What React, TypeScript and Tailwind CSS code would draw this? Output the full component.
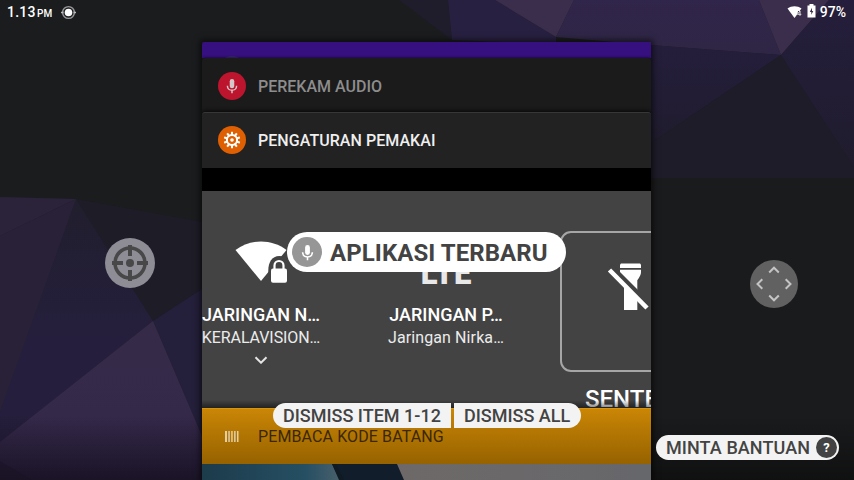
import React from "react";

function Wallpaper() {
  return (
    <svg className="absolute inset-0 h-full w-full" viewBox="0 0 854 480" preserveAspectRatio="none">
      <defs>
        <linearGradient id="leftDeep" x1="0" y1="0" x2="0" y2="1">
          <stop offset="0" stopColor="#211e2d" />
          <stop offset="0.6" stopColor="#251f3d" />
          <stop offset="1" stopColor="#251e3c" />
        </linearGradient>
        <linearGradient id="leftPeak" x1="0" y1="0" x2="0" y2="1">
          <stop offset="0" stopColor="#352b47" />
          <stop offset="0.6" stopColor="#35294a" />
          <stop offset="1" stopColor="#2c2141" />
        </linearGradient>
        <linearGradient id="topPurple" x1="0" y1="0" x2="0" y2="1">
          <stop offset="0" stopColor="#30254a" />
          <stop offset="1" stopColor="#2f2645" />
        </linearGradient>
        <linearGradient id="rightDeep" x1="0" y1="0" x2="0" y2="1">
          <stop offset="0" stopColor="#241e3c" />
          <stop offset="1" stopColor="#201c2d" />
        </linearGradient>
        <linearGradient id="bottomFade" x1="0" y1="0" x2="0" y2="1">
          <stop offset="0" stopColor="#000" stopOpacity="0" />
          <stop offset="1" stopColor="#000" stopOpacity="0.4" />
        </linearGradient>
      </defs>
      <rect width="854" height="480" fill="#1b1c1e" />
      <polygon points="0,197 76,199 202,222 202,480 0,480" fill="#1f1c28" />
      <polygon points="0,197 76,199 153,321 0,442" fill="url(#leftDeep)" />
      <polygon points="0,197 76,199 0,236" fill="#2a2339" />
      <polygon points="0,236 76,199 61,241 0,412" fill="#282137" />
      <polygon points="76,199 153,321 202,289 202,222" fill="#1e1c27" />
      <polygon points="153,321 202,289 202,436" fill="#241f3a" />
      <polygon points="0,442 153,321 202,436 202,480 0,480" fill="url(#leftPeak)" />
      <polygon points="0,461 32,480 0,480" fill="#291f3c" />
      <polygon points="399,0 448,0 452,40" fill="#1f1c2b" />
      <polygon points="448,0 495,0 556,37 556,44 452,40" fill="#282040" />
      <polygon points="495,0 574,0 556,37" fill="#3b2e4c" />
      <polygon points="574,0 759,0 781,55 651,45 556,37" fill="url(#topPurple)" />
      <polygon points="651,45 781,55 651,143" fill="url(#rightDeep)" />
      <polygon points="781,55 854,167 854,178 651,178 651,143" fill="#1e1c29" />
      <polygon points="759,0 829,0 781,55" fill="#3b2e4c" />
      <polygon points="829,0 854,0 854,167 781,55" fill="url(#rightDeep)" />
      <rect x="651" y="178" width="203" height="302" fill="#1a1b1c" />
      <rect y="415" width="854" height="65" fill="url(#bottomFade)" />
    </svg>
  );
}

function Mic({ className }: { className: string }) {
  return (
    <svg className={className} viewBox="0 0 24 24" fill="currentColor">
      <rect x="8.6" y="1.5" width="6.8" height="14" rx="3.4" />
      <path d="M4 11.5h2.2a5.8 5.8 0 0 0 11.6 0H20a8 8 0 0 1-6.9 7.7V23h-2.2v-3.8A8 8 0 0 1 4 11.5z" />
    </svg>
  );
}

const teeth = [0, 36, 72, 108, 144, 180, 216, 252, 288, 324];

function Gear() {
  return (
    <svg className="size-[18px]" viewBox="-9 -9 18 18" fill="#fff">
      {teeth.map((a) => (
        <rect key={a} x="-1" y="-8.3" width="2" height="4" rx="0.4" transform={`rotate(${a})`} />
      ))}
      <circle r="5.1" fill="none" stroke="#fff" strokeWidth="2" />
      <circle r="1.8" />
    </svg>
  );
}

function StatusBar() {
  return (
    <header className="relative flex h-6 items-center justify-between pl-[7px] pr-2 text-white">
      <div className="flex items-center">
        <span className="text-[14px] font-medium leading-6 tracking-[0.2px]">1.13</span>
        <span className="ml-[1.500px] mt-[3px] text-[10px] font-medium">PM</span>
        <svg className="ml-[9px] mt-px size-[15px]" viewBox="0 0 15 15">
          <circle cx="7.5" cy="7.5" r="5.9" fill="none" stroke="#98989a" strokeWidth="1.4" />
          <circle cx="7.5" cy="7.5" r="3.8" fill="#fff" />
          <path d="M0 7.5h2.500M12.500 7.500h2.500" stroke="#bbb" strokeWidth="1.6" />
        </svg>
      </div>
      <div className="flex items-center">
        <svg className="h-[14px] w-[16px]" viewBox="0 0 16 14">
          <path d="M.5 3.600C4.800.400 10.200.400 14.500 3.600L7.500 13z" fill="#fff" />
          <path d="M11 6h4v7h-5z" fill="#3b2e4c" />
          <path d="M13 10.800V6L10.300 9.300h4" fill="none" stroke="#ddd" strokeWidth="1" />
        </svg>
        <svg className="-mt-[2px] ml-1 h-[14px] w-[9px]" viewBox="0 0 9 14">
          <path d="M2.500 0h4v1.500H8.500v12H.5v-12h2z" fill="#fff" />
          <path d="M5 3.800 2.800 8h1.500v2.800L6.300 7H5z" fill="#3b2e4c" />
        </svg>
        <span className="ml-[4px] text-[14px] font-medium leading-6">97%</span>
      </div>
    </header>
  );
}

function WifiLocked() {
  return (
    <svg className="ml-[3px] h-[46px] w-[56px]" viewBox="0 0 56 46">
      <path d="M.5 10C15-1.500 37-1.500 51.500 10L26 41z" fill="#fff" />
      <path d="M33.300 46V30.500c0-8 3.500-14.500 11-14.500 7.500 0 11 5 11 11v19z" fill="#434343" />
      <rect x="36" y="28.500" width="16" height="14.300" rx="2" fill="#fff" />
      <path d="M39.500 30v-4.500a4.500 4.500 0 0 1 9 0V30" fill="none" stroke="#fff" strokeWidth="2.200" />
    </svg>
  );
}

function FlashlightOff() {
  return (
    <svg className="-ml-[5px] h-[48px] w-[42px]" viewBox="0 0 42 48" fill="#fff">
      <path d="M13 6.800h21v2.500q0 3.200-3.700 8V47H17V17q-4-5-4-7.500z" />
      <path d="M3.500 3 40.500 40" stroke="#434343" strokeWidth="5" />
      <path d="M14 .5h19l1 1v3.500H13V1.500z" />
      <path d="M2.500 7 40 45" stroke="#fff" strokeWidth="4.600" />
    </svg>
  );
}

function QuickTiles() {
  return (
    <section className="relative flex h-[217px] overflow-hidden bg-[#434343] pt-10 text-white">
      <div className="flex w-[118px] shrink-0 flex-col items-center pt-[9px]">
        <WifiLocked />
        <span className="mt-[17px] whitespace-nowrap text-[18px] font-medium leading-[24px]">JARINGAN N…</span>
        <span className="whitespace-nowrap text-[16px] leading-[22px] tracking-[-0.08px] text-[#ececec]">KERALAVISION…</span>
        <svg className="mt-[7px] h-[8px] w-[14px]" viewBox="0 0 14 8">
          <path d="m1.500 1.200 5.500 5.500 5.500-5.500" fill="none" stroke="#e5e5e5" strokeWidth="2" />
        </svg>
      </div>
      <div className="ml-[66px] flex w-[120px] shrink-0 flex-col items-center pt-[9px]">
        <span className="flex h-[46px] items-end text-[31px] font-black leading-[25px] text-[#e8e8e8]">LTE</span>
        <span className="mt-[17px] whitespace-nowrap text-[18px] font-medium leading-[24px]">JARINGAN P…</span>
        <span className="whitespace-nowrap text-[16px] leading-[22px] tracking-[0.1px] text-[#ececec]">Jaringan Nirka…</span>
      </div>
      <div className="ml-[54px] w-[141px] shrink-0">
        <div className="flex h-[141px] justify-center rounded-[11px] border-2 border-[#a6a6a6] pt-[30px]">
          <FlashlightOff />
        </div>
        <p className="ml-[25px] mt-[13px] text-[24px] font-medium leading-[28px]">SENTER</p>
      </div>
      <div className="absolute inset-x-0 bottom-0 h-2 bg-linear-to-b from-transparent to-black/50" />
    </section>
  );
}

function RecentApps() {
  return (
    <main className="relative ml-[202px] mt-[18px] flex h-[438px] w-[449px] flex-col overflow-hidden shadow-[0_0_6px_2px_rgba(0,0,0,0.6)]">
      <div className="h-4 shrink-0 overflow-hidden rounded-t-[3px] bg-[#35107e] pl-4 pt-[14px]">
        <div className="size-7 rounded-full bg-[#3a2674]" />
      </div>
      <div className="relative flex h-[54px] shrink-0 items-center rounded-t-[3px] bg-[#1b1b1b] pl-4 pt-px shadow-[0_0_3px_rgba(0,0,0,0.8)]">
        <div className="grid size-7 place-items-center rounded-full bg-[#bd152d] text-[#d5c8ca]">
          <Mic className="size-4" />
        </div>
        <span className="ml-3 pt-0.5 text-[16px] font-medium text-[#8d8d8d]">PEREKAM AUDIO</span>
      </div>
      <div className="relative flex h-[56px] shrink-0 items-center rounded-t-[3px] border-t border-[#373737] bg-[#222222] pb-px pl-4 shadow-[0_-1px_4px_rgba(0,0,0,0.8)]">
        <div className="grid size-7 place-items-center rounded-full bg-[#de6003]">
          <Gear />
        </div>
        <span className="ml-3 pt-px text-[16px] font-medium tracking-[0.05px] text-[#efefef]">PENGATURAN PEMAKAI</span>
      </div>
      <div className="h-[23px] shrink-0 bg-black" />
      <QuickTiles />
      <div className="flex h-[56px] shrink-0 items-center border-t border-[#d8940c] bg-linear-to-b from-[#ca8606] to-[#966200] pl-[23px]">
        <svg className="h-[11px] w-[14px]" viewBox="0 0 14 11">
          <path d="M0 0h2v11H0zM3.300 0h1.500v11H3.300zM6.200 0h1.500v11H6.200zM9.100 0h1.500v11H9.100zM12 0h1.500v11H12z" fill="#e3cfa6" />
        </svg>
        <span className="ml-[19px] pt-px text-[16px] tracking-[0.11px] text-[#3b2704]">PEMBACA KODE BATANG</span>
      </div>
      <svg className="h-4 w-full shrink-0" viewBox="0 0 449 16" preserveAspectRatio="none">
        <defs>
          <linearGradient id="photoBlue">
            <stop offset="0" stopColor="#1c3b4b" />
            <stop offset="0.75" stopColor="#264f63" />
            <stop offset="1" stopColor="#48606c" />
          </linearGradient>
          <linearGradient id="photoGrey">
            <stop offset="0" stopColor="#6e6968" />
            <stop offset="1" stopColor="#66676b" />
          </linearGradient>
        </defs>
        <rect width="449" height="16" fill="#111d2a" />
        <path d="M0 0h130l8 16H0z" fill="url(#photoBlue)" />
        <path d="M130 0h4l8 16h-5z" fill="#101a22" />
        <path d="M195 0h254v16H202z" fill="url(#photoGrey)" />
      </svg>
    </main>
  );
}

function Overlays() {
  return (
    <>
      <div className="absolute left-[105px] top-[238px] grid size-[50px] place-items-center rounded-full bg-[#8e8d96]">
        <svg className="size-[38px]" viewBox="-19 -19 38 38" fill="none" stroke="#484849">
          <circle r="15" strokeWidth="3.600" />
          <circle r="4" fill="#484849" stroke="none" />
          <path d="M0-18V-7M0 7V18M-18 0H-7M7 0H18" strokeWidth="4" />
        </svg>
      </div>
      <div className="absolute left-[750px] top-[260px] grid size-[48px] place-items-center rounded-full bg-[#616162]">
        <svg className="size-[40px]" viewBox="-20 -20 40 40" fill="none" stroke="#c4c4c4" strokeWidth="2">
          <path d="M-4.800-11.500 0-16.300l4.800 4.800M-4.800 11.500 0 16.300l4.800-4.800M-11.700-4.800-16.500 0l4.800 4.800M11.700-4.800 16.500 0 11.700 4.800" />
        </svg>
      </div>
      <div className="absolute left-[287px] top-[232px] flex h-[40px] w-[279px] items-center rounded-full bg-white pl-[5px]">
        <div className="grid size-[30px] place-items-center rounded-full bg-[#969696] text-white">
          <Mic className="size-[17px]" />
        </div>
        <span className="ml-2 whitespace-nowrap pt-0.5 text-[24px] font-bold tracking-[0.07px] text-[#434343]">APLIKASI TERBARU</span>
      </div>
      <div className="absolute left-[273px] top-[403px] flex h-[25px] gap-[3px] whitespace-nowrap text-[18px] font-medium leading-[26px] text-[#434343]">
        <div className="w-[178px] rounded-l-full bg-[#f3f3f3] pl-[10px]">DISMISS ITEM 1-12</div>
        <div className="w-[127px] rounded-r-full bg-[#f3f3f3] pl-[10px]">DISMISS ALL</div>
      </div>
      <div className="absolute left-[656px] top-[435px] flex h-[25px] w-[183px] items-center justify-between rounded-full bg-[#f3f3f3] pl-[10px] pr-[2px]">
        <span className="whitespace-nowrap text-[18px] font-medium tracking-[0.08px] text-[#434343]">MINTA BANTUAN</span>
        <span className="grid size-[21px] place-items-center rounded-full bg-[#434343] text-[13px] font-bold leading-none text-white">?</span>
      </div>
    </>
  );
}

export default function App() {
  return (
    <div className="relative h-[480px] w-[854px] overflow-hidden bg-[#1b1c1e] font-['Roboto',sans-serif]">
      <Wallpaper />
      <StatusBar />
      <RecentApps />
      <Overlays />
    </div>
  );
}
